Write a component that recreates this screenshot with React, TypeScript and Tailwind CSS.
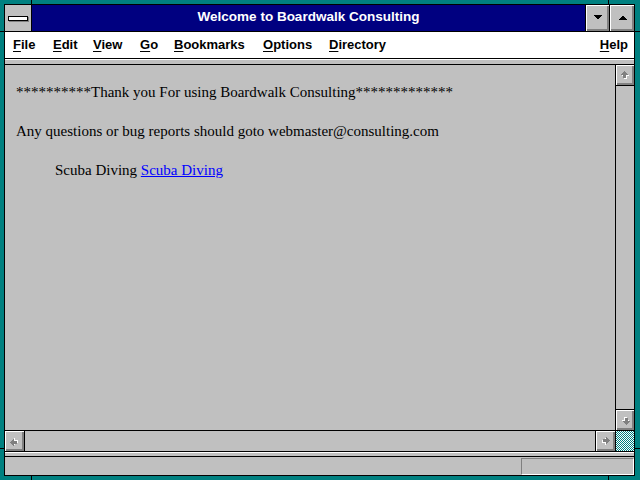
import React from 'react';

const bevel = 'shadow-[inset_1px_1px_#ffffff,inset_-1px_-1px_#808080,inset_-2px_-2px_#808080]';

// small block arrow, drawn pointing up; rotated for the other directions
function Arrow({ rotate = '' }: { rotate?: string }) {
    const cells = [
        [3, 0, 1],
        [2, 1, 3],
        [1, 2, 5],
        [0, 3, 7],
        [2, 4, 3],
        [2, 5, 3],
        [2, 6, 3],
    ];
    return (
        <svg width="9" height="9" viewBox="0 0 9 9" shapeRendering="crispEdges" className={rotate}>
            {cells.map(([x, y, w]) => (
                <rect key={`s${y}`} x={x + 1} y={y + 1} width={w} height={1} fill="#ffffff" />
            ))}
            {cells.map(([x, y, w]) => (
                <rect key={`a${y}`} x={x} y={y} width={w} height={1} fill="#808080" />
            ))}
        </svg>
    );
}

function ScrollButton({ rotate, className = '' }: { rotate?: string; className?: string }) {
    return (
        <div className={`bg-[#c0c0c0] flex items-center justify-center ${bevel} ${className}`}>
            <Arrow rotate={rotate} />
        </div>
    );
}

function TitleButton({ up, className = '' }: { up?: boolean; className?: string }) {
    return (
        <div className={`bg-[#c0c0c0] flex items-center justify-center ${bevel} ${className}`}>
            <svg width="9" height="5" viewBox="0 0 9 5" shapeRendering="crispEdges" className="-mt-[1px]">
                <polygon points={up ? '0,5 4.5,0.5 9,5' : '0,0 4.5,4.5 9,0'} fill="#000000" />
            </svg>
        </div>
    );
}

const menu = [
    { label: 'File', w: 'w-[40px]' },
    { label: 'Edit', w: 'w-[40px]' },
    { label: 'View', w: 'w-[47px]' },
    { label: 'Go', w: 'w-[34px]' },
    { label: 'Bookmarks', w: 'w-[89px]' },
    { label: 'Options', w: 'w-[66px]' },
    { label: 'Directory', w: 'w-[80px]' },
];

function MenuLabel({ label }: { label: string }) {
    return (
        <>
            <span className="underline underline-offset-[2px]">{label[0]}</span>
            {label.slice(1)}
        </>
    );
}

export default function App() {
    return (
        <div className="w-[640px] h-[480px] bg-[#008080] relative pl-[4px] pr-[5px] py-[4px]">
            {/* frame corner marks */}
            <div className="absolute left-[31px] top-0 w-[1px] h-[4px] bg-black" />
            <div className="absolute left-[608px] top-0 w-[1px] h-[4px] bg-black" />
            <div className="absolute left-[31px] bottom-0 w-[1px] h-[4px] bg-black" />
            <div className="absolute left-[608px] bottom-0 w-[1px] h-[4px] bg-black" />
            <div className="absolute left-0 top-[31px] w-[4px] h-[1px] bg-black" />
            <div className="absolute left-0 top-[448px] w-[4px] h-[1px] bg-black" />
            <div className="absolute right-0 top-[31px] w-[5px] h-[1px] bg-black" />
            <div className="absolute right-0 top-[448px] w-[5px] h-[1px] bg-black" />

            <div className="h-full border border-black bg-[#c0c0c0] flex flex-col font-['Liberation_Sans',Arial,sans-serif]">
                {/* Title bar */}
                <div className="h-[27px] flex border-b border-black shrink-0">
                    <div className="w-[27px] border-r border-black bg-[#c0c0c0] flex items-center justify-center">
                        <div className="w-[20px] h-[5px] border border-black bg-white shadow-[1px_1px_#808080] -ml-[1px]" />
                    </div>
                    <div className="flex-1 bg-[#000080] text-white font-bold text-[13.5px] flex items-center justify-center pb-[1px]">
                        Welcome to Boardwalk Consulting
                    </div>
                    <TitleButton className="w-[24px] border-l border-black" />
                    <TitleButton up className="w-[25px] border-l border-black" />
                </div>

                {/* Menu bar */}
                <div className="h-[27px] bg-white border-b border-black flex items-center pl-[8px] pr-[6px] pb-[1px] text-[13px] font-bold text-black shrink-0">
                    {menu.map((m) => (
                        <span key={m.label} className={`${m.w} shrink-0`}>
                            <MenuLabel label={m.label} />
                        </span>
                    ))}
                    <span className="ml-auto">
                        <MenuLabel label="Help" />
                    </span>
                </div>

                {/* collapsed toolbar strip */}
                <div className="h-[6px] border-t border-white border-b border-b-black bg-[#c0c0c0] shrink-0" />

                {/* Content + vertical scrollbar */}
                <div className="h-[366px] flex border-b border-black shrink-0">
                    <div className="flex-1 border-r border-black pl-[11px] pt-[17px] font-['Liberation_Serif','Times_New_Roman',serif] text-[15px] leading-[20px] text-black">
                        <div>**********Thank you For using Boardwalk Consulting*************</div>
                        <div className="mt-[19px]">Any questions or bug reports should goto webmaster@consulting.com</div>
                        <div className="mt-[19px] pl-[39px]">
                            Scuba Diving{' '}
                            <a href="#" className="text-[#0000ff] underline">
                                Scuba Diving
                            </a>
                        </div>
                    </div>
                    <div className="w-[18px] flex flex-col">
                        <ScrollButton className="h-[21px] border-b border-black" />
                        <div className="flex-1" />
                        <ScrollButton rotate="rotate-180" className="h-[21px] border-t border-black" />
                    </div>
                </div>

                {/* Horizontal scrollbar */}
                <div className="h-[21px] flex border-b border-black shrink-0">
                    <ScrollButton rotate="-rotate-90" className="w-[20px] border-r border-black" />
                    <div className="flex-1" />
                    <ScrollButton rotate="rotate-90" className="w-[21px] border-l border-r border-black" />
                    <div className="w-[18px] bg-[repeating-conic-gradient(#008080_0_25%,#ffffff_0_50%)] bg-[length:2px_2px]" />
                </div>

                {/* strip */}
                <div className="h-[5px] border-t border-white border-b border-b-black bg-[#c0c0c0] shrink-0" />

                {/* Status bar */}
                <div className="flex-1 flex justify-end pt-[1px]">
                    <div className="w-[113px] h-[17px] border-t border-l border-[#808080] border-b-white border-r-white border-b border-r" />
                </div>
            </div>
        </div>
    );
}
